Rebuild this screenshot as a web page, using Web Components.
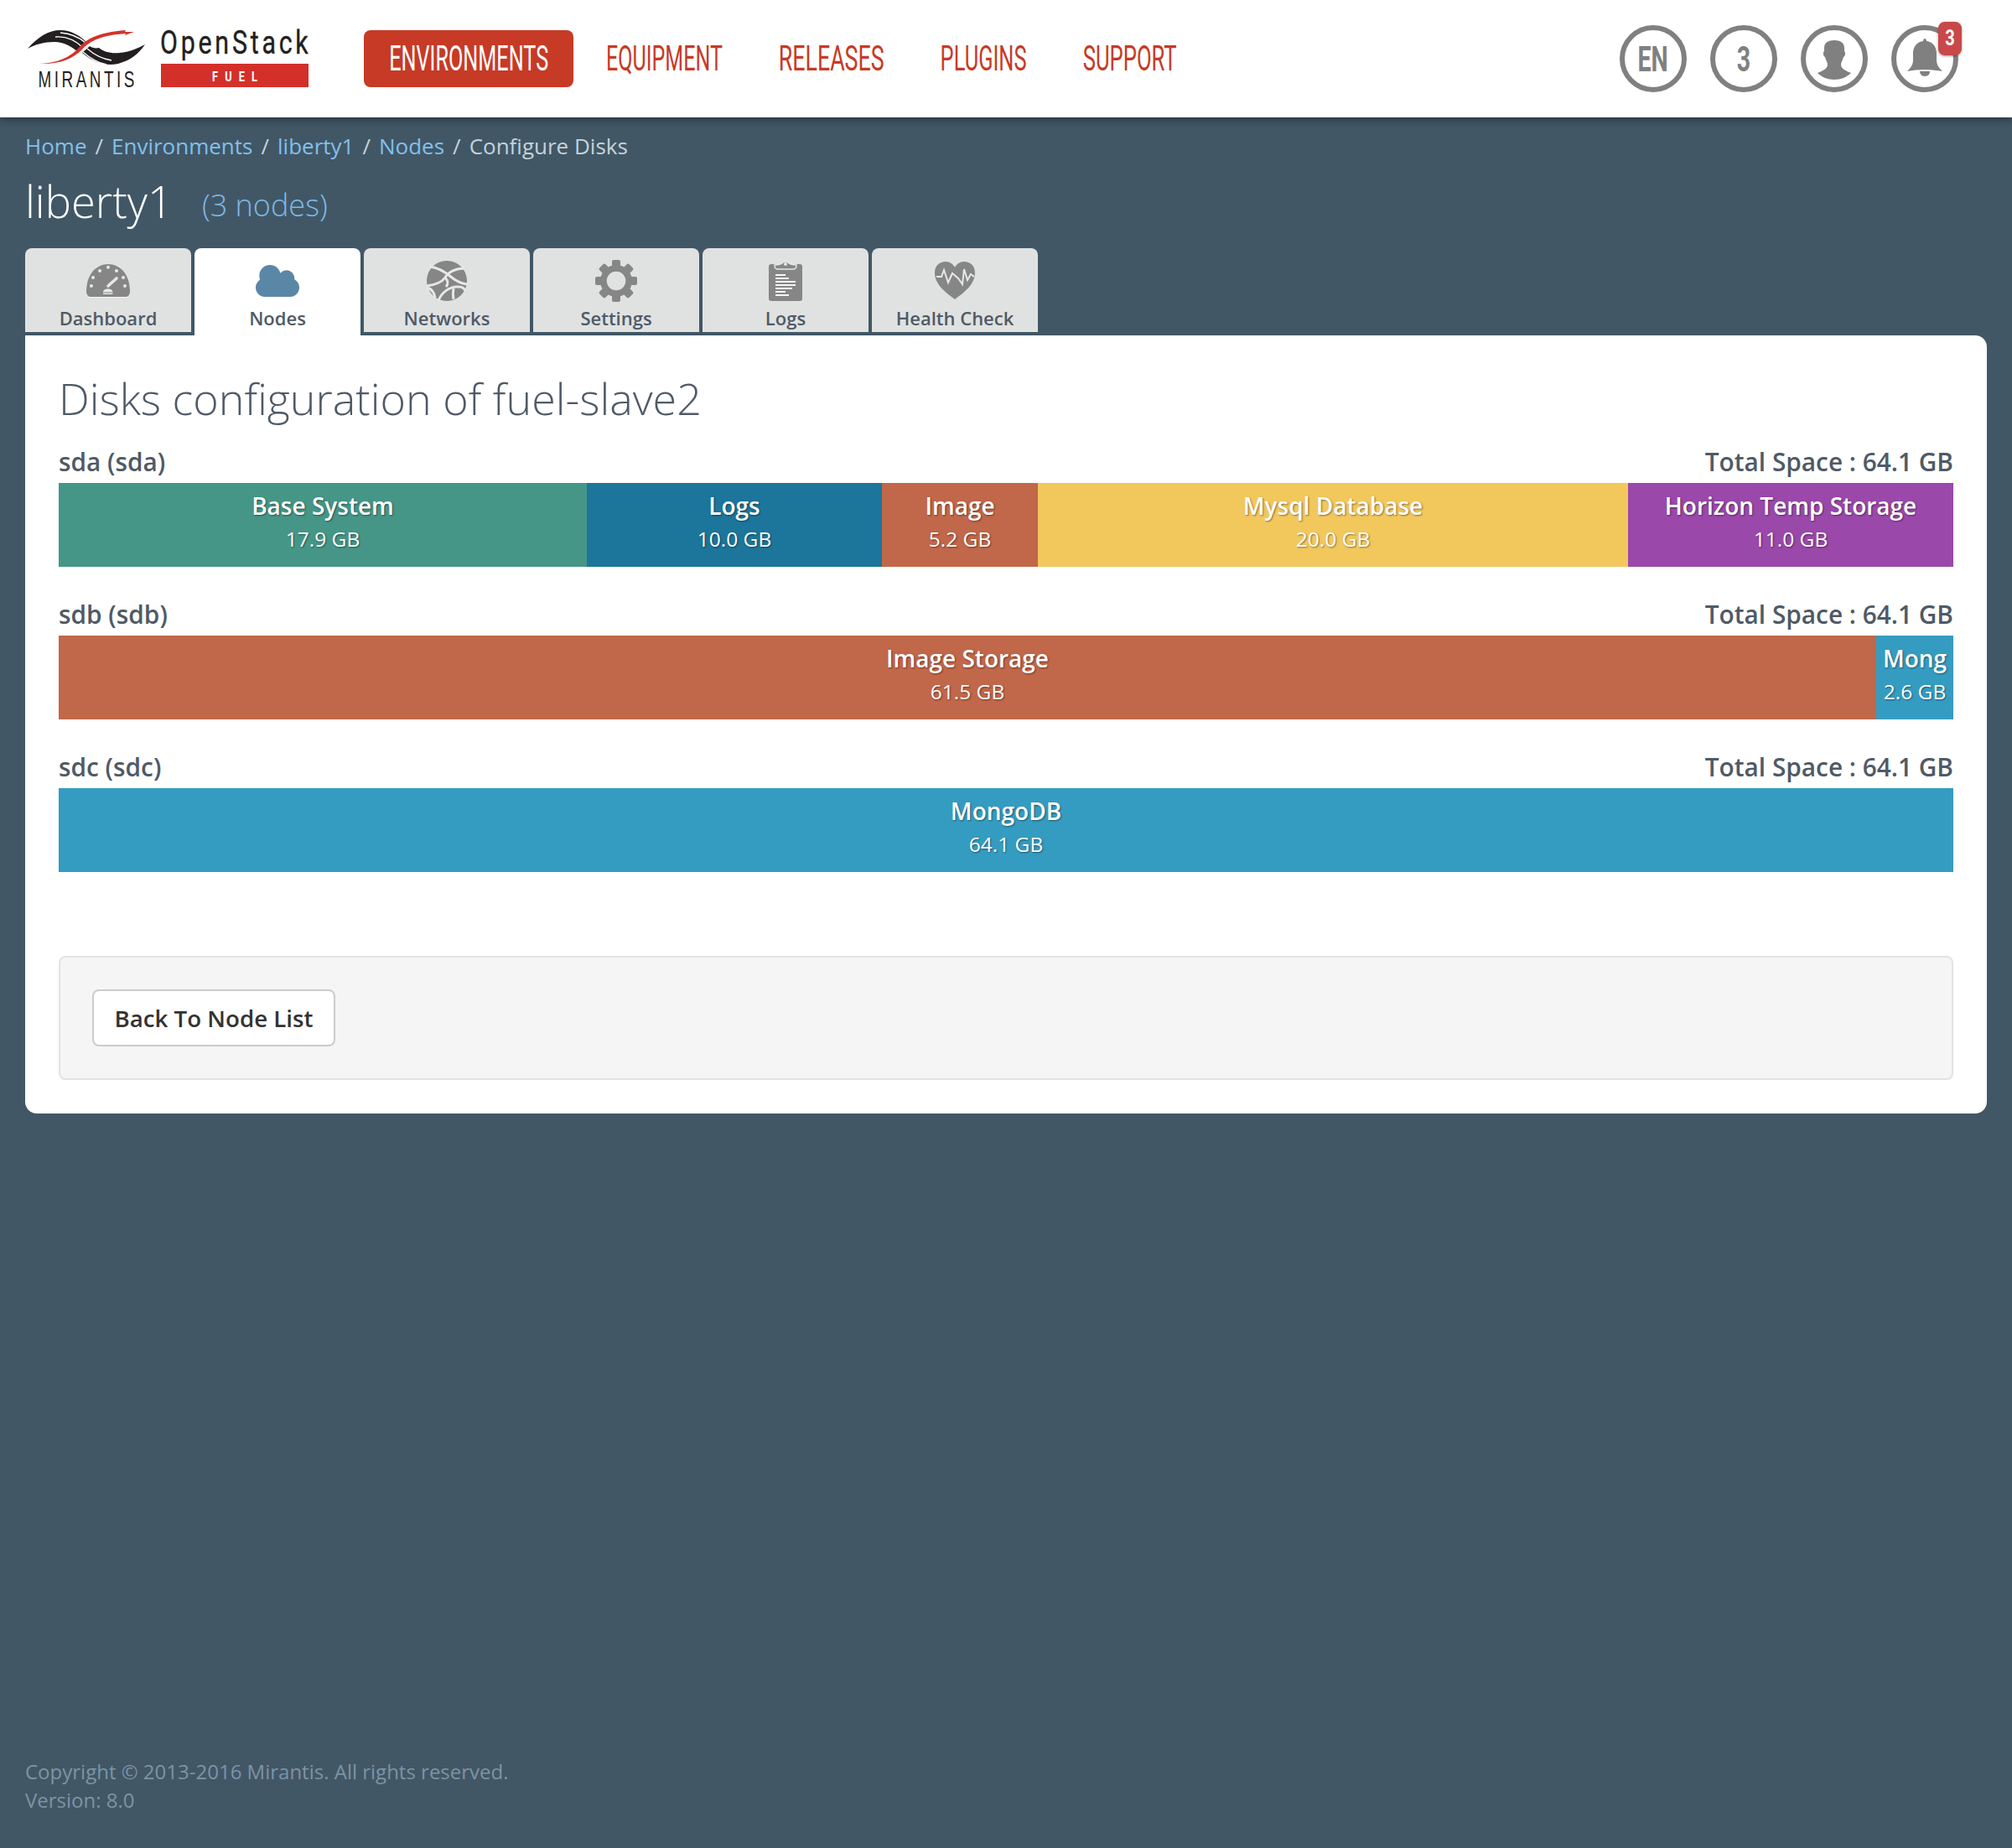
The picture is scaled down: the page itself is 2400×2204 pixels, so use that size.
<!DOCTYPE html>
<html lang="en">
<head>
<meta charset="utf-8">
<title>Fuel - Configure Disks</title>
<style>
  html, body { margin: 0; padding: 0; }
  body { background: #415766; font-family: "Open Sans", sans-serif; }
</style>
</head>
<body>

<fuel-page>
  <fuel-header slot="header">
    <nav-link active fit="190">ENVIRONMENTS</nav-link>
    <nav-link fit="139">EQUIPMENT</nav-link>
    <nav-link fit="126">RELEASES</nav-link>
    <nav-link fit="103">PLUGINS</nav-link>
    <nav-link fit="112">SUPPORT</nav-link>
    <round-icon slot="icons" label="EN"></round-icon>
    <round-icon slot="icons" label="3"></round-icon>
    <round-icon slot="icons" icon="user"></round-icon>
    <round-icon slot="icons" icon="bell" badge="3"></round-icon>
  </fuel-header>

  <bread-crumbs></bread-crumbs>
  <env-title name="liberty1" nodes="(3 nodes)"></env-title>

  <tab-strip>
    <tab-item icon="gauge">Dashboard</tab-item>
    <tab-item icon="cloud" active>Nodes</tab-item>
    <tab-item icon="network">Networks</tab-item>
    <tab-item icon="gear">Settings</tab-item>
    <tab-item icon="logs">Logs</tab-item>
    <tab-item icon="heart">Health Check</tab-item>
  </tab-strip>

  <content-panel>
    <h-title>Disks configuration of fuel-slave2</h-title>
    <disk-row name="sda (sda)" total="Total Space : 64.1 GB">
      <disk-seg w="630" color="#459687" name="Base System" size="17.9 GB"></disk-seg>
      <disk-seg w="352" color="#1c759a" name="Logs" size="10.0 GB"></disk-seg>
      <disk-seg w="186" color="#c1674a" name="Image" size="5.2 GB"></disk-seg>
      <disk-seg w="704" color="#f2c85d" name="Mysql Database" size="20.0 GB"></disk-seg>
      <disk-seg w="388" color="#9a48aa" name="Horizon Temp Storage" size="11.0 GB"></disk-seg>
    </disk-row>
    <disk-row name="sdb (sdb)" total="Total Space : 64.1 GB">
      <disk-seg w="2168" color="#c1674a" name="Image Storage" size="61.5 GB"></disk-seg>
      <disk-seg w="92" color="#359cc1" name="Mong" size="2.6 GB"></disk-seg>
    </disk-row>
    <disk-row name="sdc (sdc)" total="Total Space : 64.1 GB">
      <disk-seg w="2260" color="#359cc1" name="MongoDB" size="64.1 GB"></disk-seg>
    </disk-row>
    <action-well>Back To Node List</action-well>
  </content-panel>

  <page-footer slot="footer"></page-footer>
</fuel-page>

<script>
const ICONS = {
  gauge: `<svg width="52" height="40" viewBox="0 0 52 40">
    <path fill="#f3f4f4" d="M0 33.5C0 13 12 1 26 1s26 12 26 32.5c0 4-2 6.5-5 6.5H5c-3 0-5-2.500-5-6.500z"/>
    <path fill="#868686" d="M0 32.500C0 12 12 0 26 0s26 12 26 32.500c0 4-2 6.500-5 6.500H5c-3 0-5-2.500-5-6.500z"/>
    <g fill="#e6e8e7"><circle cx="26" cy="3.700" r="2"/><circle cx="16" cy="8" r="2"/><circle cx="36" cy="8" r="2"/><circle cx="8" cy="16" r="2"/><circle cx="44" cy="16" r="2"/><circle cx="6" cy="26" r="2"/><circle cx="46" cy="26" r="2"/>
    <path d="M20 33.500c0-2.500 2.500-4 5.700-4s5.700 1.500 5.700 4z"/><rect x="20" y="34.500" width="11.500" height="1.500"/></g>
    <path fill="none" stroke="#e6e8e7" stroke-width="3.600" stroke-linecap="round" d="M26 26l10-9"/></svg>`,
  cloud: `<svg width="52" height="38" viewBox="0 0 52 38" fill="#5a87a6">
    <circle cx="17" cy="12.700" r="12.700"/><circle cx="36.700" cy="16" r="9.700"/><circle cx="11" cy="27" r="11"/><circle cx="41" cy="27" r="11"/><path d="M11 14h30v24H11z"/></svg>`,
  network: `<svg width="48" height="48" viewBox="0 0 48 48">
    <circle cx="24" cy="24" r="24" fill="#868686"/>
    <g fill="none" stroke="#e6e8e7" stroke-width="3"><path d="M3 7C13 8 23 14 30 20c5 4 11 7 18 8"/><path d="M45 9c-10 0-19 4-23 11C17 27 8 29 0 30"/><path d="M22 20c4 4 4 7 1 11"/><path d="M14 48c3-10 14-18 24-17 4 0 7 2 8 5"/><path d="M1 32c5 2 8 6 9 12"/><path d="M32 33c-1 5-1 8 0 13"/></g></svg>`,
  gear: `<svg width="50" height="50" viewBox="0 0 50 50">
    <g fill="#868686"><rect x="20" y="0" width="10" height="50" rx="2"/><rect x="20" y="0" width="10" height="50" rx="2" transform="rotate(45 25 25)"/><rect x="20" y="0" width="10" height="50" rx="2" transform="rotate(90 25 25)"/><rect x="20" y="0" width="10" height="50" rx="2" transform="rotate(135 25 25)"/></g>
    <circle cx="25" cy="25" r="19" fill="#868686"/>
    <circle cx="25" cy="25" r="11.300" fill="#e0e2e1"/></svg>`,
  logs: `<svg width="40" height="48" viewBox="0 0 40 48">
    <rect x="0" y="4" width="40" height="44" rx="3" fill="#868686"/>
    <path d="M7 5c0 4 1 5 4 5h18c3 0 4-1 4-5-4 0-8-1-10-3-2-1.500-4-1.500-6 0-2 2-6 3-10 3z" fill="#868686" stroke="#e6e8e7" stroke-width="1.500"/>
    <circle cx="20" cy="4" r="2" fill="#e6e8e7"/>
    <g fill="#f4f5f5"><rect x="8" y="16" width="12" height="2"/><rect x="8" y="20" width="16" height="2"/><rect x="8" y="24" width="24" height="2"/><rect x="8" y="28" width="24" height="2"/><rect x="8" y="32" width="20" height="2"/><rect x="8" y="36" width="12" height="2"/><rect x="8" y="40" width="16" height="2"/></g></svg>`,
  heart: `<svg width="48" height="46" viewBox="0 0 48 46">
    <path fill="#868686" d="M24 45C12 36 0 27 0 13 0 5 6 0 13 0c5 0 9 3 11 7 2-4 6-7 11-7 7 0 13 5 13 13 0 14-12 23-24 32z"/>
    <path fill="none" stroke="#e6e8e7" stroke-width="2" d="M2 18h6l3-8 5 15 5-11 7 6 5 7 2-18 4 13 4-7 4 3"/></svg>`,
  user: `<svg width="42" height="50" viewBox="-21 -24 42 50">
    <path fill="#808080" d="M-12-12c0-6 5-9 12-9s12 3 12 9v4c2 2 1 6-1 7-1 4-3 6-3 9 0 5 5 7 12 10-5 5-12 8-20 8s-15-3-20-8c7-3 12-5 12-10 0-3-2-5-3-9-2-1-3-5-1-7z"/></svg>`,
  bell: `<svg width="44" height="48" viewBox="-22 -24 44 48">
    <path fill="#808080" d="M-2-21c0-4 4-4 4 0 7 1 12 6 12 15V2c0 5 3 9 7 13-6-1-13-2-21-2s-15 1-21 2c4-4 7-8 7-13v-8c0-9 5-14 12-15z"/>
    <path fill="#808080" d="M-6 15h12c0 3-2 6-6 6s-6-3-6-6z"/></svg>`
};

class FuelPage extends HTMLElement {
  constructor() {
    super();
    this.attachShadow({mode: "open"}).innerHTML = `
    <style>
      :host { display: flex; flex-direction: column; min-height: 100vh; color: #fff; }
      .main { display: block; padding: 0 30px; flex: 1; }
    </style>
    <slot name="header"></slot>
    <div class="main"><slot></slot></div>
    <slot name="footer"></slot>`;
  }
}

class FuelHeader extends HTMLElement {
  constructor() {
    super();
    this.attachShadow({mode: "open"}).innerHTML = `
    <style>
      :host { display: flex; align-items: center; height: 140px; background: #fff; padding: 0 64px 0 30px; box-sizing: border-box; box-shadow: 0 2px 10px rgba(0,0,0,.45); position: relative; }
      .logo { display: block; flex: none; margin-right: 64px; }
      .nav { display: flex; align-items: center; }
      .icons { margin-left: auto; display: flex; gap: 28px; }
    </style>
    <svg class="logo" width="340" height="80" viewBox="30 30 340 80">
      <path fill="#231f20" d="M33 58C45 44 58 36 72 36c12 0 23 6 32 15l-11 11C85 55 76 50 65 50c-13 0-23 3-32 8z"/>
      <path fill="#231f20" d="M173 53c-8 12-18 19-32 23-13 3-27 0-43-13l9-8c3 2 7 3 11 2 6 5 14 7 25 6 11-1 21-5 30-10z"/>
      <g fill="none" stroke="#fff" stroke-width="1.300"><path d="M66 44c13-1 24 4 33 13"/><path d="M72 39c12 1 22 5 30 12"/><path d="M104 58c8 7 17 12 29 14"/><path d="M99 62c8 7 18 13 28 15"/></g>
      <path fill="#d5322a" d="M47 76c24-1 38-9 48-20 9-10 21-17 55-20l-1 2 11 0-11 4 1-2c-28 2-42 8-52 19-11 11-27 18-51 17z"/>
      <text transform="translate(45.500 104) scale(.7 1)" font-family="'Liberation Sans',sans-serif" font-size="27" fill="#231f20" textLength="164" lengthAdjust="spacing">MIRANTIS</text>
      <text transform="translate(191 64) scale(.8 1)" font-family="'Roboto',sans-serif" font-size="38" fill="#231f20" stroke="#231f20" stroke-width=".4" textLength="221" lengthAdjust="spacing">OpenStack</text>
      <rect x="192" y="76" width="176" height="28" fill="#d3302a"/>
      <text transform="translate(253 97) scale(.75 1)" font-family="'Roboto',sans-serif" font-weight="700" font-size="17" fill="#fff" textLength="72" lengthAdjust="spacing">FUEL</text>
    </svg>
    <div class="nav"><slot></slot></div>
    <div class="icons"><slot name="icons"></slot></div>`;
  }
}

class NavLink extends HTMLElement {
  constructor() {
    super();
    this.attachShadow({mode: "open"}).innerHTML = `
    <style>
      :host { display: flex; align-items: center; justify-content: center; height: 68px; box-sizing: border-box; color: #c73a26; font: 400 42px "Roboto", sans-serif; cursor: pointer; }
      :host([active]) { background: #c73a26; color: #fff; border-radius: 8px; width: 250px; margin-right: 5.5px; }
      span { flex: none; white-space: nowrap; display: block; }
    </style>
    <span><slot></slot></span>`;
  }
  connectedCallback() {
    // squeeze the text to the condensed width of the original nav font
    const target = +this.getAttribute("fit");
    const span = this.shadowRoot.querySelector("span");
    const natural = span.getBoundingClientRect().width;
    if (!this.hasAttribute("active")) this.style.width = target + 67 + "px";
    span.style.transform = `translateY(-1px) scaleX(${target / natural})`;
  }
}

class RoundIcon extends HTMLElement {
  constructor() {
    super();
    this.attachShadow({mode: "open"});
  }
  connectedCallback() {
    const label = this.getAttribute("label");
    const icon = this.getAttribute("icon");
    const badge = this.getAttribute("badge");
    this.shadowRoot.innerHTML = `
    <style>
      :host { display: flex; align-items: center; justify-content: center; width: 80px; height: 80px; box-sizing: border-box; border: 6px solid #808080; border-radius: 50%; position: relative; color: #808080; }
      .label { font: 700 42px "Roboto", sans-serif; transform: scaleX(.68); white-space: nowrap; }
      svg { display: block; }
      .badge { position: absolute; left: 50px; top: -10px; width: 28px; height: 40px; border-radius: 8px; background: #c9484a; color: #fff; font: 700 25px/40px "Roboto", sans-serif; text-align: center; box-shadow: 0 1px 3px rgba(0,0,0,.4); }
      .badge span { display: block; transform: scaleX(.8); }
    </style>
    ${label ? `<span class="label">${label}</span>` : ICONS[icon]}
    ${badge ? `<div class="badge"><span>${badge}</span></div>` : ""}`;
  }
}

class BreadCrumbs extends HTMLElement {
  constructor() {
    super();
    this.attachShadow({mode: "open"}).innerHTML = `
    <style>
      :host { display: block; padding-top: 16px; height: 36px; font: 400 26px/36px "Open Sans", sans-serif; color: #c5d2da; white-space: nowrap; }
      a { color: #82c0ec; text-decoration: none; }
      i { font-style: normal; padding: 0 10px; }
    </style>
    <a href="#">Home</a><i>/</i><a href="#">Environments</a><i>/</i><a href="#">liberty1</a><i>/</i><a href="#">Nodes</a><i>/</i>Configure Disks`;
  }
}

class EnvTitle extends HTMLElement {
  constructor() {
    super();
    this.attachShadow({mode: "open"});
  }
  connectedCallback() {
    this.shadowRoot.innerHTML = `
    <style>
      :host { display: block; height: 92px; line-height: 96px; font-family: "Open Sans", sans-serif; font-weight: 300; white-space: nowrap; }
      .name { font-size: 52.5px; color: #fff; }
      .nodes { font-size: 36px; color: #7db9e6; margin-left: 35px; vertical-align: 2px; }
    </style>
    <span class="name">${this.getAttribute("name")}</span><span class="nodes">${this.getAttribute("nodes")}</span>`;
  }
}

class TabStrip extends HTMLElement {
  constructor() {
    super();
    this.attachShadow({mode: "open"}).innerHTML = `
    <style>
      :host { display: flex; gap: 4px; height: 104px; align-items: flex-start; margin-top: 12px; }
    </style>
    <slot></slot>`;
  }
}

class TabItem extends HTMLElement {
  constructor() {
    super();
    this.attachShadow({mode: "open"});
  }
  connectedCallback() {
    this.shadowRoot.innerHTML = `
    <style>
      :host { display: flex; flex-direction: column; align-items: center; width: 198px; height: 100px; box-sizing: border-box; background: #e0e2e1; border-radius: 8px 8px 0 0; color: #4f5a66; font: 600 22px "Open Sans", sans-serif; }
      :host([active]) { background: #fff; height: 104px; }
      .ic { height: 66px; display: flex; align-items: center; justify-content: center; padding-top: 12px; box-sizing: border-box; }
      .tx { line-height: 30px; margin-top: 2px; white-space: nowrap; }
      svg { display: block; }
    </style>
    <div class="ic">${ICONS[this.getAttribute("icon")]}</div>
    <div class="tx"><slot></slot></div>`;
  }
}

class ContentPanel extends HTMLElement {
  constructor() {
    super();
    this.attachShadow({mode: "open"}).innerHTML = `
    <style>
      :host { display: block; background: #fff; border-radius: 0 14px 14px 14px; padding: 35px 40px 40px; color: #4f5a66; }
    </style>
    <slot></slot>`;
  }
}

class HTitle extends HTMLElement {
  constructor() {
    super();
    this.attachShadow({mode: "open"}).innerHTML = `
    <style>
      :host { display: block; height: 97px; font: 300 52px/80px "Open Sans", sans-serif; color: #4f5a66; white-space: nowrap; }
    </style>
    <slot></slot>`;
  }
}

class DiskRow extends HTMLElement {
  constructor() {
    super();
    this.attachShadow({mode: "open"});
  }
  connectedCallback() {
    this.shadowRoot.innerHTML = `
    <style>
      :host { display: block; margin-bottom: 38px; }
      :host(:last-of-type) { margin-bottom: 100px; }
      .head { display: flex; justify-content: space-between; height: 44px; font: 600 29.8px/38px "Open Sans", sans-serif; color: #4f5a66; }
      .bar { display: flex; height: 100px; }
    </style>
    <div class="head"><span>${this.getAttribute("name")}</span><span>${this.getAttribute("total")}</span></div>
    <div class="bar"><slot></slot></div>`;
  }
}

class DiskSeg extends HTMLElement {
  constructor() {
    super();
    this.attachShadow({mode: "open"});
  }
  connectedCallback() {
    this.shadowRoot.innerHTML = `
    <style>
      :host { display: block; flex: none; width: ${this.getAttribute("w")}px; background: ${this.getAttribute("color")}; color: #fff; text-align: center; overflow: hidden; text-shadow: 1px 1px 2px rgba(0,0,0,.45); box-sizing: border-box; padding-top: 6px; }
      .name { font: 600 28px/43px "Open Sans", sans-serif; white-space: nowrap; }
      .size { font: 400 24.5px/36px "Open Sans", sans-serif; white-space: nowrap; }
    </style>
    <div class="name">${this.getAttribute("name")}</div>
    <div class="size">${this.getAttribute("size")}</div>`;
  }
}

class ActionWell extends HTMLElement {
  constructor() {
    super();
    this.attachShadow({mode: "open"}).innerHTML = `
    <style>
      :host { display: block; background: #f5f5f5; border: 2px solid #e3e3e3; border-radius: 8px; padding: 38px; height: 148px; box-sizing: border-box; }
      button { display: block; width: 290px; height: 68px; background: #fff; border: 2px solid #ccc; border-radius: 8px; font: 600 27.7px "Open Sans", sans-serif; color: #333; padding: 0; cursor: pointer; }
    </style>
    <button><slot></slot></button>`;
  }
}

class PageFooter extends HTMLElement {
  constructor() {
    super();
    this.attachShadow({mode: "open"}).innerHTML = `
    <style>
      :host { display: block; padding: 0 30px 40px; font: 400 24px/34px "Open Sans", sans-serif; color: #7d93a4; }
    </style>
    <div>Copyright © 2013-2016 Mirantis. All rights reserved.</div>
    <div>Version: 8.0</div>`;
  }
}

customElements.define("fuel-page", FuelPage);
customElements.define("fuel-header", FuelHeader);
customElements.define("nav-link", NavLink);
customElements.define("round-icon", RoundIcon);
customElements.define("bread-crumbs", BreadCrumbs);
customElements.define("env-title", EnvTitle);
customElements.define("tab-strip", TabStrip);
customElements.define("tab-item", TabItem);
customElements.define("content-panel", ContentPanel);
customElements.define("h-title", HTitle);
customElements.define("disk-row", DiskRow);
customElements.define("disk-seg", DiskSeg);
customElements.define("action-well", ActionWell);
customElements.define("page-footer", PageFooter);
</script>
</body>
</html>
